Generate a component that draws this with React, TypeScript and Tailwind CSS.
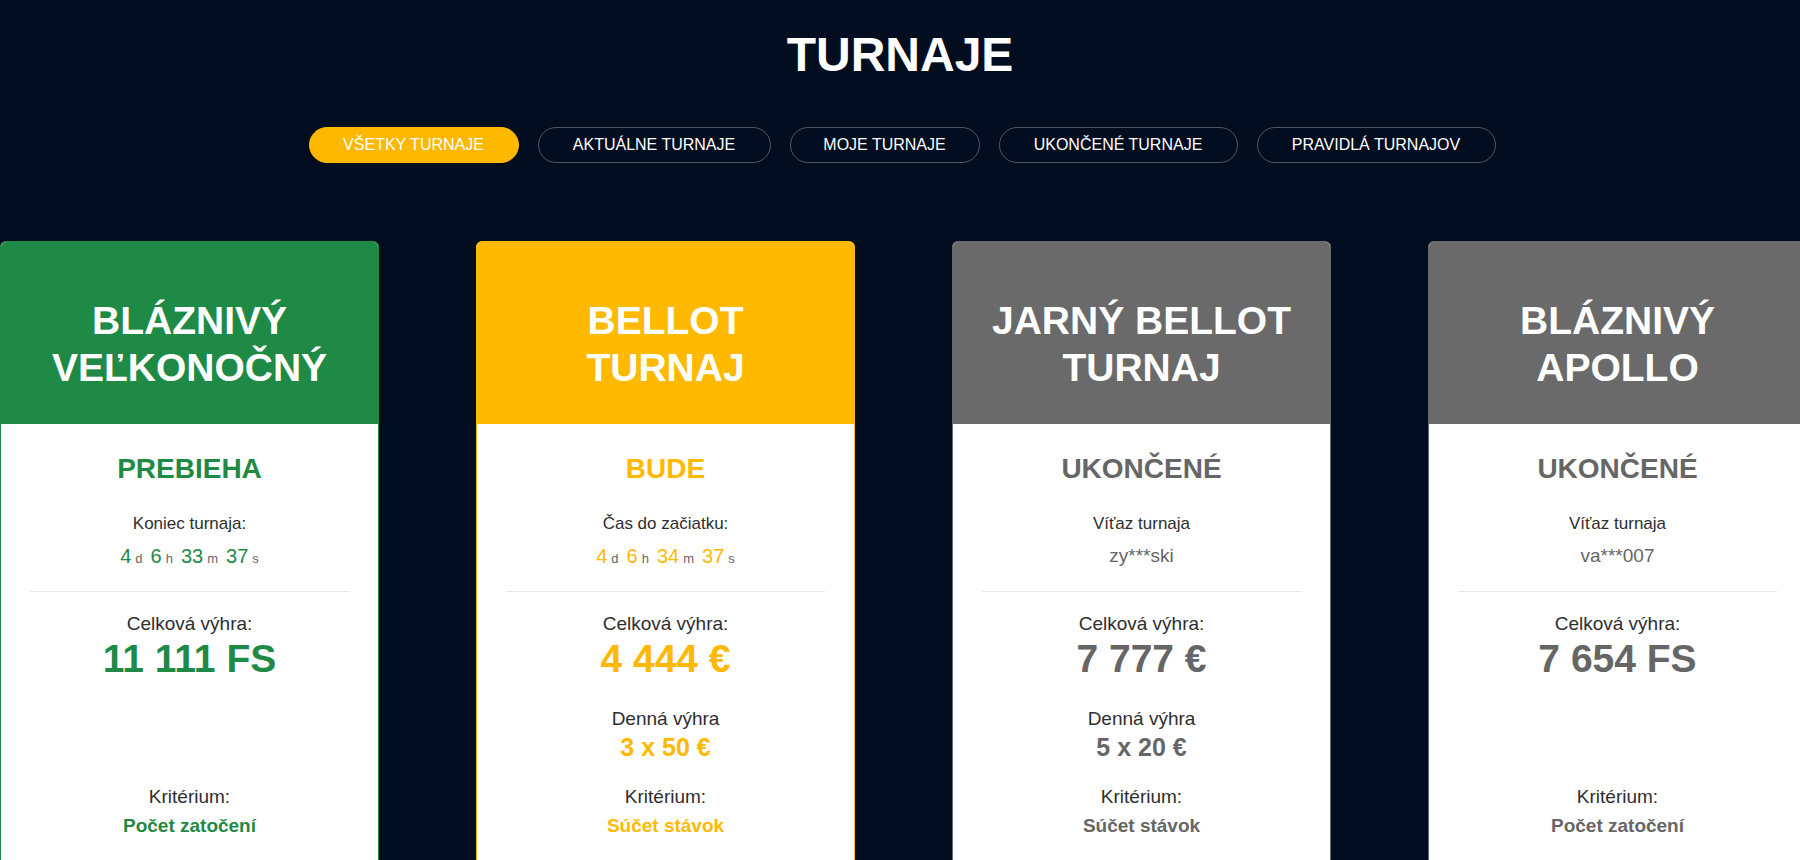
import React from "react";

type Tournament = {
  title: string[];
  status: string;
  theme: "green" | "yellow" | "gray";
  infoLabel: string;
  countdown?: [string, string][];
  winner?: string;
  prize: string;
  daily?: string;
  criterion: string;
};

const TABS = [
  { label: "VŠETKY TURNAJE", w: "w-[210px]", active: true },
  { label: "AKTUÁLNE TURNAJE", w: "w-[233px]" },
  { label: "MOJE TURNAJE", w: "w-[190px]" },
  { label: "UKONČENÉ TURNAJE", w: "w-[239px]" },
  { label: "PRAVIDLÁ TURNAJOV", w: "w-[239px]" },
];

const TOURNAMENTS: Tournament[] = [
  {
    title: ["BLÁZNIVÝ", "VEĽKONOČNÝ"],
    status: "PREBIEHA",
    theme: "green",
    infoLabel: "Koniec turnaja:",
    countdown: [["4", "d"], ["6", "h"], ["33", "m"], ["37", "s"]],
    prize: "11 111 FS",
    criterion: "Počet zatočení",
  },
  {
    title: ["BELLOT", "TURNAJ"],
    status: "BUDE",
    theme: "yellow",
    infoLabel: "Čas do začiatku:",
    countdown: [["4", "d"], ["6", "h"], ["34", "m"], ["37", "s"]],
    prize: "4 444 €",
    daily: "3 x 50 €",
    criterion: "Súčet stávok",
  },
  {
    title: ["JARNÝ BELLOT", "TURNAJ"],
    status: "UKONČENÉ",
    theme: "gray",
    infoLabel: "Víťaz turnaja",
    winner: "zy***ski",
    prize: "7 777 €",
    daily: "5 x 20 €",
    criterion: "Súčet stávok",
  },
  {
    title: ["BLÁZNIVÝ", "APOLLO"],
    status: "UKONČENÉ",
    theme: "gray",
    infoLabel: "Víťaz turnaja",
    winner: "va***007",
    prize: "7 654 FS",
    criterion: "Počet zatočení",
  },
];

const THEMES = {
  green: { head: "bg-[#1e8a45]", border: "border-[#1e8a45]", text: "text-[#1e8a45]" },
  yellow: { head: "bg-[#ffb900]", border: "border-[#ffb900]", text: "text-[#ffb900]" },
  gray: { head: "bg-[#6a6a6a]", border: "border-[#6a6a6a]", text: "text-[#666666]" },
};

function TournamentCard({ t }: { t: Tournament }) {
  const theme = THEMES[t.theme];
  return (
    <div className={`w-[379px] shrink-0 rounded-t-md overflow-hidden border ${theme.border} bg-white`}>
      {/* Header */}
      <div className={`h-[182px] ${theme.head} pt-[55px] text-center text-white font-bold text-[39px] leading-[47px]`}>
        {t.title.map((line) => (
          <div key={line}>{line}</div>
        ))}
      </div>

      {/* Body */}
      <div className="flex flex-col items-center text-center pt-[29px] pb-10 text-[#2e2e2e]">
        <div className={`text-[28px] leading-[32px] font-bold ${theme.text}`}>{t.status}</div>
        <div className="mt-[27px] text-[17px] leading-[24px]">{t.infoLabel}</div>
        {t.countdown ? (
          <div className="mt-[6px] h-[28px] leading-[28px] flex items-baseline">
            {t.countdown.map(([n, u]) => (
              <span key={u} className="mx-[4px] flex items-baseline">
                <span className={`text-[20px] ${theme.text}`}>{n}</span>
                <span className="ml-[4px] text-[13px] text-[#666666]">{u}</span>
              </span>
            ))}
          </div>
        ) : (
          <div className="mt-[6px] h-[28px] leading-[28px] text-[19px] text-[#666666]">{t.winner}</div>
        )}

        <div className="mt-[21px] h-px self-stretch mx-[29px] bg-[#e8e8e8]" />

        <div className="mt-[19px] text-[19px] leading-[26px]">Celková výhra:</div>
        <div className={`text-[39px] leading-[44px] font-bold ${theme.text}`}>{t.prize}</div>

        <div className="h-[81px] flex flex-col items-center">
          {t.daily && (
            <>
              <div className="mt-[25px] text-[19px] leading-[26px]">Denná výhra</div>
              <div className={`text-[25px] leading-[30px] font-bold ${theme.text}`}>{t.daily}</div>
            </>
          )}
        </div>

        <div className="mt-[22px] text-[19px] leading-[26px]">Kritérium:</div>
        <div className={`mt-[3px] text-[19px] leading-[26px] font-bold ${theme.text}`}>{t.criterion}</div>
      </div>
    </div>
  );
}

export default function App() {
  return (
    <div className="h-[860px] w-[1800px] overflow-hidden bg-[#020d1f] font-['Liberation_Sans',Arial,sans-serif]">
      {/* Title */}
      <h1 className="pt-[27px] text-center text-white font-bold text-[48px] leading-[56px]">TURNAJE</h1>

      {/* Tabs */}
      <div className="mt-[44px] flex justify-center gap-[19px] pl-[4px]">
        {TABS.map((tab) => (
          <button
            key={tab.label}
            className={`${tab.w} h-[36px] rounded-full text-[16px] text-white border ${
              tab.active ? "bg-[#ffb800] border-[#ffb800]" : "border-white/30"
            }`}
          >
            {tab.label}
          </button>
        ))}
      </div>

      {/* Cards */}
      <div className="mt-[78px] flex gap-[97px]">
        {TOURNAMENTS.map((t, i) => (
          <TournamentCard key={i} t={t} />
        ))}
      </div>
    </div>
  );
}
